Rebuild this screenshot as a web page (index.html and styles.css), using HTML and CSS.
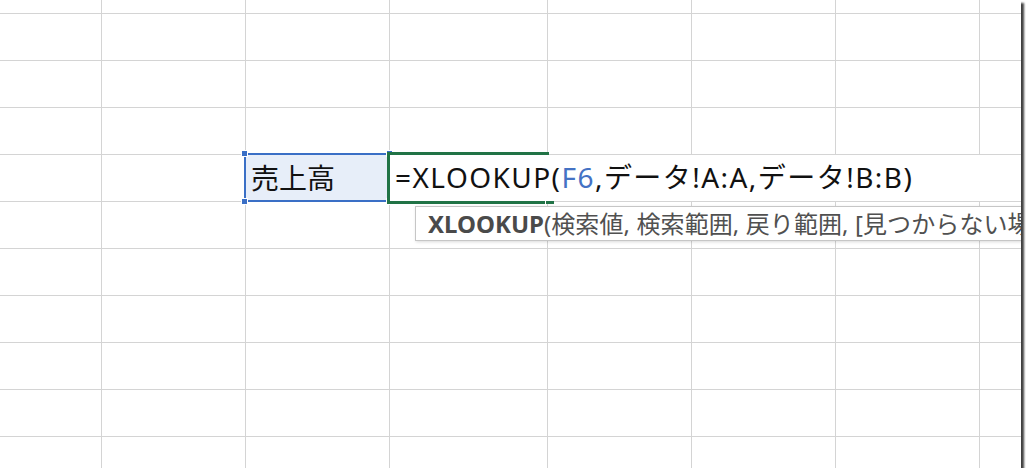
FILE: index.html
```html
<!DOCTYPE html>
<html lang="ja">
<head>
  <meta charset="UTF-8">
  <meta name="viewport" content="width=device-width, initial-scale=1.0">
  <title>XLOOKUP</title>
  <link rel="stylesheet" href="styles.css">
</head>
<body>

  <div id="sheet">
    <div class="grid" id="grid"></div>

    <!-- referenced range (blue) -->
    <div class="range-box">
      <span class="handle tl"></span>
      <span class="handle tr"></span>
      <span class="handle bl"></span>
      <span class="handle br"></span>
    </div>

    <!-- cell being edited -->
    <div class="editor">=XLOOKUP(<span class="ref">F6</span>,データ!A:A,データ!B:B)</div>
    <div class="edit-frame"><span class="fill-handle"></span></div>

    <!-- function tip, runs past the window edge -->
    <div class="tip"><b>XLOOKUP</b>(検索値, 検索範囲, 戻り範囲, [見つからない場合], [一致モード], [検索モード])</div>
  </div>

  <script>
    var grid = document.getElementById('grid');
    var rows = 11;
    var cols = 8;
    for (var r = 0; r < rows; r++) {
      for (var c = 0; c < cols; c++) {
        var cell = document.createElement('div');
        cell.className = 'cell';
        if (r === 4 && c === 2) {
          cell.className = 'cell label';
          cell.textContent = '売上高';
        }
        grid.appendChild(cell);
      }
    }
  </script>

</body>
</html>
```

FILE: styles.css
```css
body {
  margin: 0;
  padding: 0;
  background-color: #fff;
  font-family: "Noto Sans", "Noto Sans CJK JP", sans-serif;
}

#sheet {
  position: relative;
  width: 1021px;
  height: 468px;
  overflow: hidden;
  background-color: #fff;
  box-shadow: 3px 3px 2px rgba(0, 0, 0, 0.75);
}

.grid {
  display: grid;
  grid-template-columns: 101px 143px 143px 157px 143px 143px 143px 41px;
  grid-template-rows: 13px repeat(9, 46px) 31px;
  gap: 1px;
  background-color: #d4d4d4;
}

.cell {
  background-color: #fff;
}

.label {
  background-color: #e7eef9;
  font-size: 28px;
  line-height: 46px;
  padding-left: 5px;
  color: #111;
}

.range-box {
  position: absolute;
  left: 244px;
  top: 153px;
  width: 142px;
  height: 45px;
  border: 2px solid #3a6fc6;
}

.handle {
  position: absolute;
  width: 5px;
  height: 5px;
  background-color: #3a6fc6;
  border: 1px solid #fff;
}

.handle.tl { left: -5px; top: -5px; }
.handle.tr { right: -5px; top: -5px; }
.handle.bl { left: -5px; bottom: -5px; }
.handle.br { right: -5px; bottom: -5px; }

.editor {
  position: absolute;
  left: 390px;
  top: 155px;
  right: 0;
  height: 46px;
  padding-left: 5px;
  background-color: #fff;
  font-size: 28px;
  line-height: 44px;
  letter-spacing: 1.45px;
  color: #111;
  white-space: nowrap;
}

.editor .ref {
  color: #4472c4;
}

.edit-frame {
  position: absolute;
  left: 387px;
  top: 152px;
  width: 159px;
  height: 46px;
  border: 3px solid #217346;
  border-right: none;
}

.fill-handle {
  position: absolute;
  right: -5px;
  bottom: -3px;
  width: 8px;
  height: 3px;
  background-color: #217346;
  border-left: 1px solid #fff;
}

.tip {
  position: absolute;
  left: 415px;
  top: 206px;
  padding: 2px 12px;
  background-color: #fff;
  border: 1px solid #c6c6c6;
  box-shadow: 1px 1px 3px rgba(0, 0, 0, 0.15);
  font-size: 24px;
  line-height: 29px;
  letter-spacing: 0.1px;
  color: #505050;
  white-space: nowrap;
}

.tip b {
  color: #4a4a4a;
  letter-spacing: 0;
}
```
